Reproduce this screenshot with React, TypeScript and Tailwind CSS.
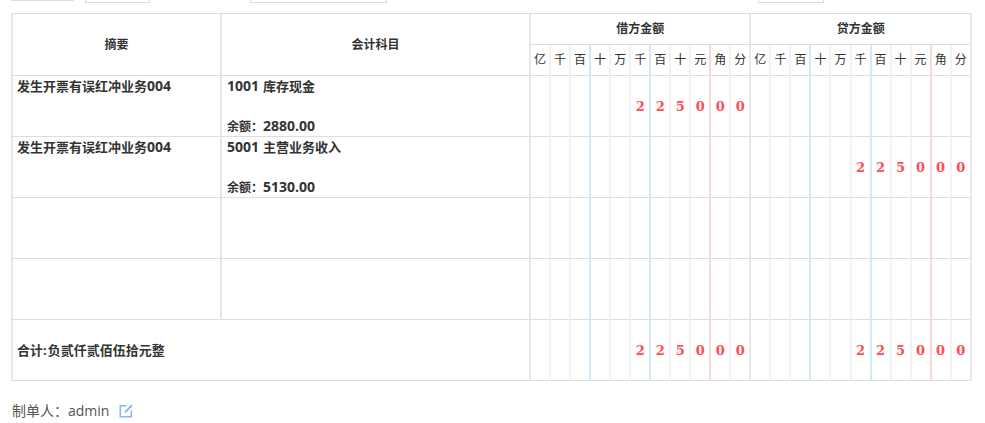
const UNITS = ['亿', '千', '百', '十', '万', '千', '百', '十', '元', '角', '分']
const AMOUNT = ['', '', '', '', '', '2', '2', '5', '0', '0', '0']
const EMPTY = UNITS.map(() => '')

const FONT = "font-['Open_Sans','Noto_Sans_CJK_SC',sans-serif]"

const rows = [
  { summary: '发生开票有误红冲业务', code: '004', no: '1001', name: '库存现金', balance: '2880.00', debit: AMOUNT, credit: EMPTY },
  { summary: '发生开票有误红冲业务', code: '004', no: '5001', name: '主营业务收入', balance: '5130.00', debit: EMPTY, credit: AMOUNT },
  { summary: '', code: '', no: '', name: '', balance: '', debit: EMPTY, credit: EMPTY },
  { summary: '', code: '', no: '', name: '', balance: '', debit: EMPTY, credit: EMPTY },
]

// left rule of each unit column: 十 and 百 are blue, 角 is pink
function ruleClass(i: number) {
  if (i === 0) return 'border-l-[#e8e8e8]'
  if (i === 3 || i === 6) return 'border-l-[#d2e9f7]'
  if (i === 9) return 'border-l-[#f5dadd]'
  return 'border-l-[#f2f2f2]'
}

function DigitCells({ digits }: { digits: string[] }) {
  return (
    <>
      {digits.map((d, i) => (
        <td
          key={i}
          className={`border-b border-l-2 border-b-[#dddddd] p-0 pt-[2px] text-center align-middle font-['DejaVu_Serif',serif] text-[13px] font-bold text-[#ff4d55] ${ruleClass(i)}`}
        >
          {d}
        </td>
      ))}
    </>
  )
}

function Stub({ className }: { className: string }) {
  return <div className={`h-[3px] border-x border-b border-[#dddddd] ${className}`} />
}

function EditIcon() {
  return (
    <svg width="14" height="14" viewBox="0 0 14 14" fill="none" stroke="#8ab8f5" strokeWidth="1.6" className="ml-[10px]">
      <path d="M7.5 1.8H1.3v11h11V6.5" />
      <path d="M6 8.2 13 1.2" strokeWidth="2" />
    </svg>
  )
}

export default function App() {
  return (
    <div className={`h-[423px] w-[985px] overflow-hidden bg-white ${FONT}`}>
      {/* Inputs above, cut off by the top edge */}
      <div className="flex h-[13px] items-start pl-[11px]">
        <Stub className="-mt-[2px] w-[63px] bg-[#f5f5f5]" />
        <Stub className="ml-[11px] w-[65px]" />
        <Stub className="ml-[100px] w-[137px]" />
        <Stub className="ml-[371px] w-[66px]" />
      </div>

      <table className="ml-[11px] w-[961px] table-fixed border-separate border-spacing-0 border-r-2 border-r-[#e8e8e8] text-[#333333]">
        <colgroup>
          <col className="w-[209px]" />
          <col className="w-[309px]" />
          {Array.from({ length: 22 }).map((_, i) => (
            <col key={i} />
          ))}
        </colgroup>
        <thead>
          <tr className="h-[32px]">
            <th rowSpan={2} className="border-y border-l-2 border-y-[#dddddd] border-l-[#e8e8e8] p-0 text-center text-[12px] font-bold">
              摘要
            </th>
            <th rowSpan={2} className="border-y border-l-2 border-y-[#dddddd] border-l-[#e8e8e8] p-0 text-center text-[12px] font-bold">
              会计科目
            </th>
            <th colSpan={11} className="border-y border-l-2 border-y-[#dddddd] border-l-[#e8e8e8] p-0 text-center text-[12px] font-bold">
              借方金额
            </th>
            <th colSpan={11} className="border-y border-l-2 border-y-[#dddddd] border-l-[#e8e8e8] p-0 text-center text-[12px] font-bold">
              贷方金额
            </th>
          </tr>
          <tr className="h-[31px]">
            {[0, 1].map((side) =>
              UNITS.map((u, i) => (
                <th
                  key={`${side}-${i}`}
                  className={`border-b border-l-2 border-b-[#dddddd] p-0 text-center text-[12px] font-normal ${ruleClass(i)}`}
                >
                  {u}
                </th>
              )),
            )}
          </tr>
        </thead>
        <tbody>
          {rows.map((row, idx) => (
            <tr key={idx} className="h-[61px]">
              <td className="border-b border-l-2 border-b-[#dddddd] border-l-[#e8e8e8] px-[4px] align-top text-[13px] leading-[20px] font-bold">
                {row.summary}
                <span className="text-[14px]">{row.code}</span>
              </td>
              <td className="border-b border-l-2 border-b-[#dddddd] border-l-[#e8e8e8] px-[5px] align-top font-bold">
                <div className="flex h-[60px] flex-col justify-between">
                  {row.no && (
                    <div className="h-[20px] text-[13px] leading-[20px]">
                      <span className="mr-[4px] text-[14px]">{row.no}</span>
                      {row.name}
                    </div>
                  )}
                  {row.balance && (
                    <div className="h-[20px] text-[12px] leading-[20px]">
                      余额：<span className="text-[14px]">{row.balance}</span>
                    </div>
                  )}
                </div>
              </td>
              <DigitCells digits={row.debit} />
              <DigitCells digits={row.credit} />
            </tr>
          ))}
          <tr className="h-[61px]">
            <td colSpan={2} className="border-b border-l-2 border-b-[#dddddd] border-l-[#e8e8e8] px-[4px] pt-[2px] text-[13px] font-bold">
              合计:<span className="ml-[1px]">负贰仟贰佰伍拾元整</span>
            </td>
            <DigitCells digits={AMOUNT} />
            <DigitCells digits={AMOUNT} />
          </tr>
        </tbody>
      </table>

      <div className="mt-[20px] flex items-center pl-[12px] text-[14px] leading-[20px] text-[#555555]">
        <span>制单人：</span>
        <span>admin</span>
        <EditIcon />
      </div>
    </div>
  )
}
